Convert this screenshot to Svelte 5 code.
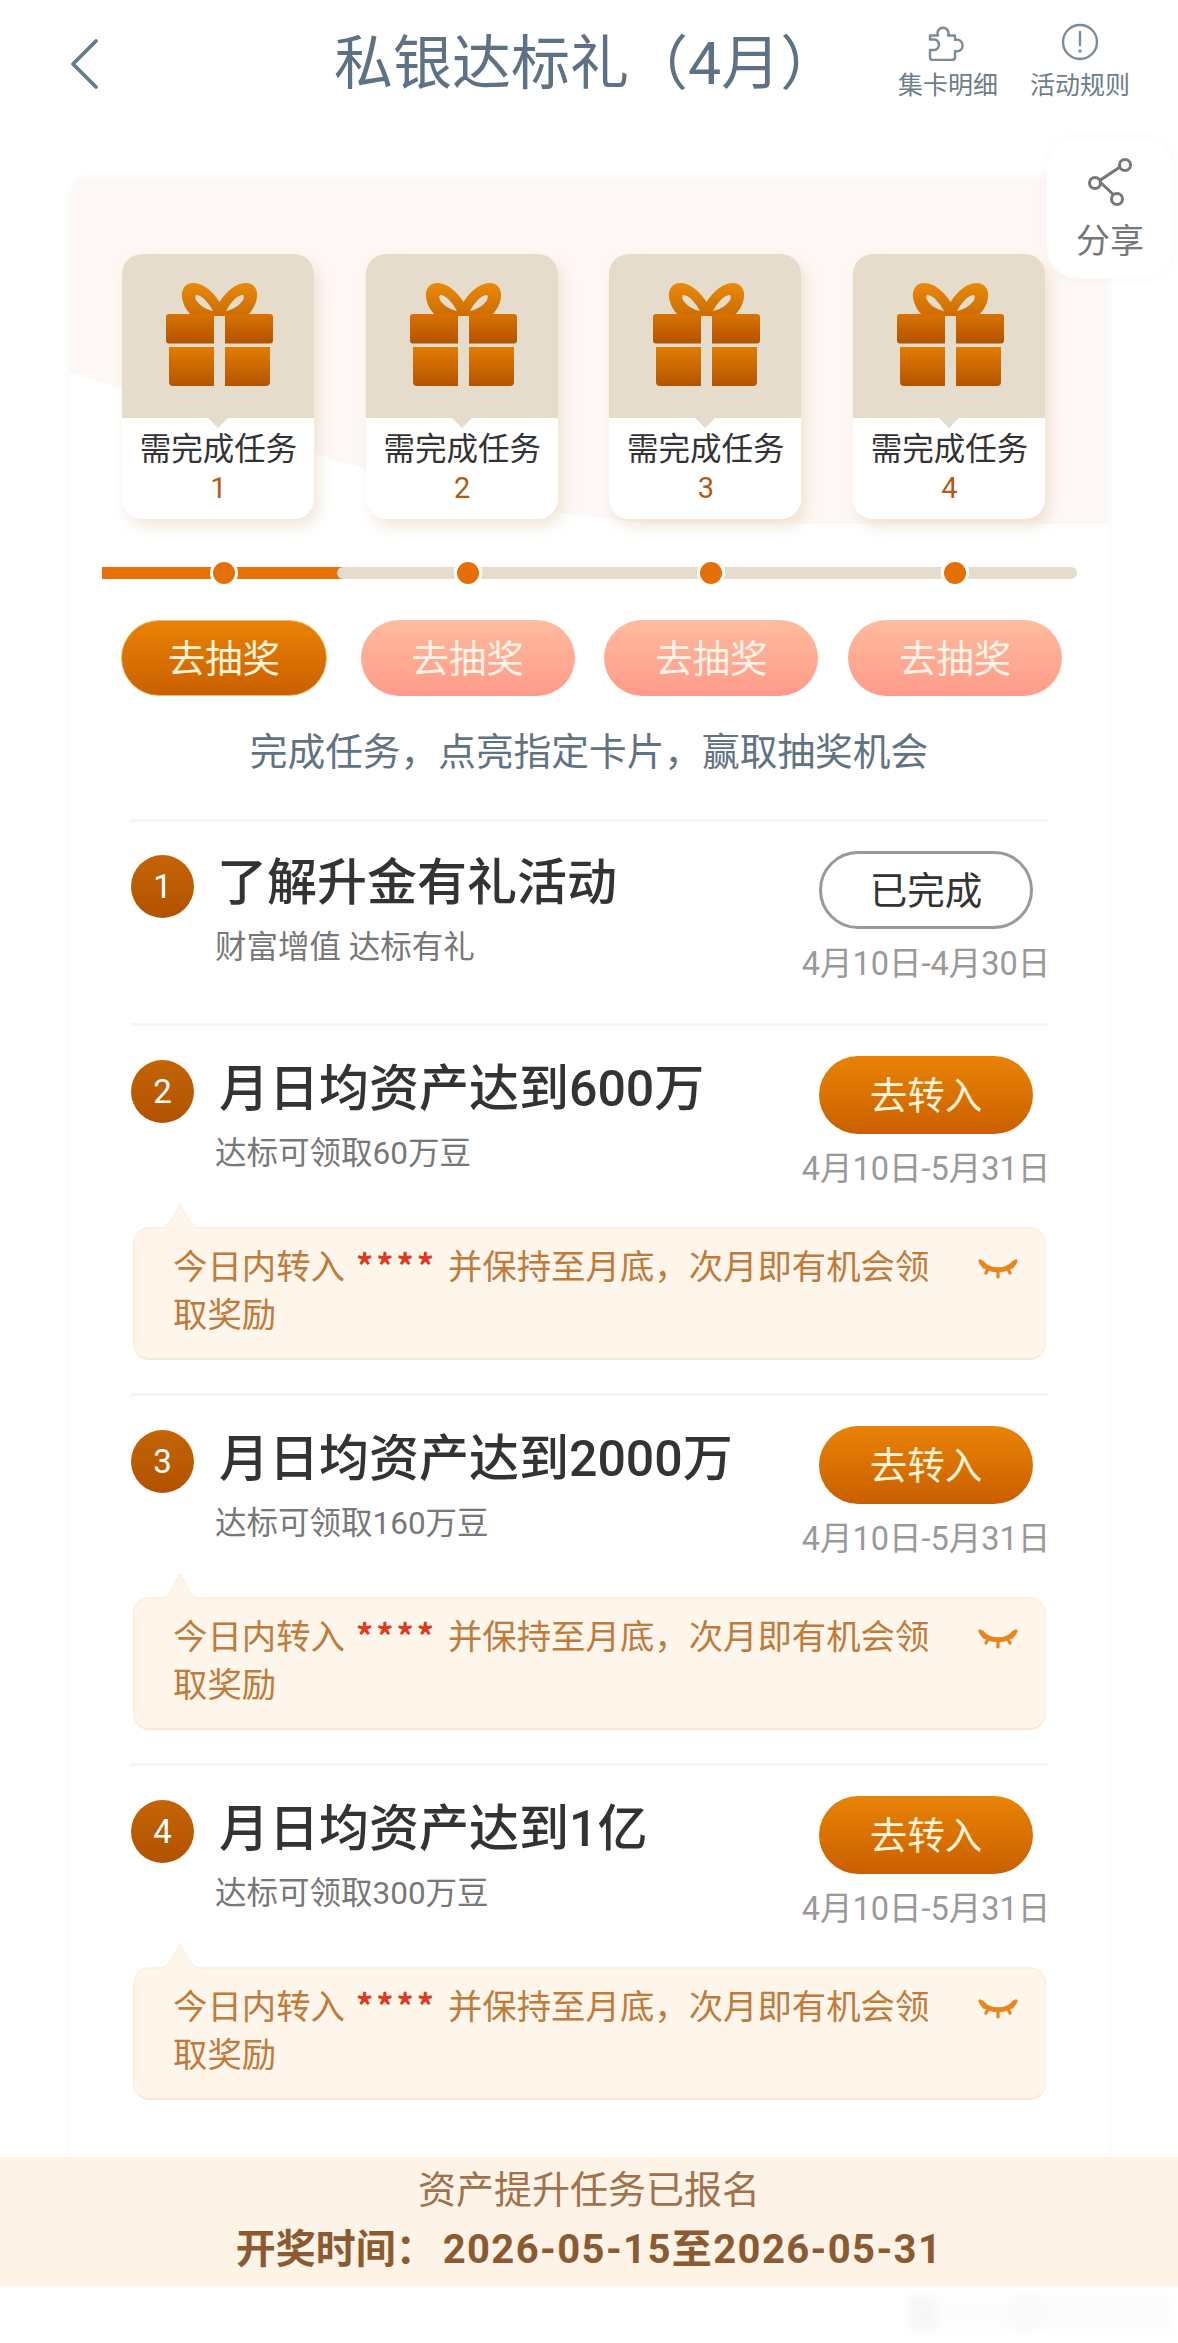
<script>
  const prizes = [1, 2, 3, 4];
  const tasks = [
    { n: 2, title: '月日均资产达到600万', sub: '达标可领取60万豆', date: '4月10日-5月31日' },
    { n: 3, title: '月日均资产达到2000万', sub: '达标可领取160万豆', date: '4月10日-5月31日' },
    { n: 4, title: '月日均资产达到1亿', sub: '达标可领取300万豆', date: '4月10日-5月31日' }
  ];
</script>

<div class="page">
  <header class="header">
    <svg class="back" width="30" height="50" viewBox="0 0 30 50"><path d="M27 2 L4 25 L27 48" fill="none" stroke="#5f7a8c" stroke-width="3.6" stroke-linecap="round" stroke-linejoin="round"/></svg>
    <h1 class="title">私银达标礼（4月）</h1>
    <div class="actions">
      <div class="action">
        <svg width="40" height="38" viewBox="0 0 40 38"><path d="M2 12.500 H10 A5.500 5.500 0 1 1 20 12.500 H27 V17 A5.800 5.800 0 1 1 27 28 V34 Q27 37 24 37 H5 Q2 37 2 34 V27 H7 A5.500 5.500 0 0 0 7 16.500 H2 Z" fill="none" stroke="#7b8b98" stroke-width="2.4" stroke-linejoin="round"/></svg>
        <span>集卡明细</span>
      </div>
      <div class="action">
        <svg width="38" height="38" viewBox="0 0 38 38"><circle cx="19" cy="19" r="17" fill="none" stroke="#7b8b98" stroke-width="2.4"/><path d="M19 9 V22" stroke="#7b8b98" stroke-width="2.4" stroke-linecap="round"/><circle cx="19" cy="28" r="1.7" fill="#7b8b98"/></svg>
        <span>活动规则</span>
      </div>
    </div>
  </header>

  <div class="share">
    <svg width="44" height="50" viewBox="0 0 44 50"><path d="M32 10 L11 24 L28 40" fill="none" stroke="#777" stroke-width="3"/><circle cx="37" cy="8" r="5.5" fill="#fff" stroke="#777" stroke-width="3"/><circle cx="7" cy="26" r="5.5" fill="#fff" stroke="#777" stroke-width="3"/><circle cx="29" cy="42" r="5.5" fill="#fff" stroke="#777" stroke-width="3"/></svg>
    <span>分享</span>
  </div>

  <main class="card">
    <div class="wash"></div>

    <div class="prizes">
      {#each prizes as p}
        <div class="prize">
          <div class="prize-top">
            <svg width="107" height="103" viewBox="0 0 107 103">
              <defs>
                <linearGradient id="bow{p}" x1="0" y1="0" x2="0" y2="1"><stop offset="0" stop-color="#e98a08"/><stop offset="1" stop-color="#cc6c02"/></linearGradient>
                <linearGradient id="box{p}" x1="0" y1="0" x2="0" y2="1"><stop offset="0" stop-color="#e27c00"/><stop offset="1" stop-color="#b45400"/></linearGradient>
                <linearGradient id="lid{p}" x1="0" y1="0" x2="0" y2="1"><stop offset="0" stop-color="#d87200"/><stop offset="1" stop-color="#b25300"/></linearGradient>
              </defs>
              <path fill-rule="evenodd" fill="url(#bow{p})" d="M53.5 19 C46 7 36 0 27 0 C19 0 15 7 16 14 C17 22 21 28 26 33 L81 33 C86 28 90 22 91 14 C92 7 88 0 80 0 C71 0 61 7 53.5 19 Z M30 12 C35 11 43 20 47 28 C39 26 33 22 30 17 C29 15 29 13 30 12 Z M77 12 C72 11 64 20 60 28 C68 26 74 22 77 17 C78 15 78 13 77 12 Z"/>
              <path fill="url(#lid{p})" d="M3 31 H48 V60.500 H3 Q0 60.500 0 57.500 V34 Q0 31 3 31 Z M59 31 H104 Q107 31 107 34 V57.500 Q107 60.500 104 60.500 H59 Z"/>
              <path fill="url(#box{p})" d="M3 64 H48 V103 H7 Q3 103 3 99 Z M59 64 H104 V99 Q104 103 100 103 H59 Z"/>
            </svg>
          </div>
          <div class="prize-bottom">
            <span class="prize-label">需完成任务</span>
            <span class="prize-num">{p}</span>
          </div>
        </div>
      {/each}
    </div>

    <div class="progress">
      <div class="track"></div>
      <div class="fill"></div>
      {#each prizes as p}
        <div class="stop"><i></i></div>
      {/each}
    </div>

    <div class="draws">
      {#each prizes as p}
        <div class="draw-cell">
          <button class="draw" class:muted={p > 1}>去抽奖</button>
        </div>
      {/each}
    </div>

    <p class="caption">完成任务，点亮指定卡片，赢取抽奖机会</p>

    <section class="task">
      <div class="row">
        <div class="left">
          <div class="badge">1</div>
          <div class="copy">
            <div class="task-title first">了解升金有礼活动</div>
            <div class="task-sub">财富增值 达标有礼</div>
          </div>
        </div>
        <div class="right">
          <button class="cta done">已完成</button>
          <div class="date">4月10日-4月30日</div>
        </div>
      </div>
    </section>

    {#each tasks as t}
      <section class="task tipped">
        <div class="row">
          <div class="left">
            <div class="badge">{t.n}</div>
            <div class="copy">
              <div class="task-title">{t.title}</div>
              <div class="task-sub">{t.sub}</div>
            </div>
          </div>
          <div class="right">
            <button class="cta">去转入</button>
            <div class="date">{t.date}</div>
          </div>
        </div>
        <div class="tip">
          <svg class="tip-arrow" width="34" height="27" viewBox="0 0 34 27"><path d="M1 27 C7 22 13 10 17 1 C21 10 27 22 33 27 Z" fill="#fef5eb"/><path d="M1 25 C7 20 13 10 17 1 C21 10 27 20 33 25" fill="none" stroke="#fdf0e2" stroke-width="1.500"/></svg>
          <p class="tip-text">今日内转入<b>****</b>并保持至月底，次月即有机会领<br />取奖励</p>
          <svg class="tip-icon" width="40" height="22" viewBox="0 0 40 22"><path d="M4 5 C11 14 29 14 36 5" fill="none" stroke="#e9851c" stroke-width="5" stroke-linecap="round"/><path d="M2 3 L6 9 M38 3 L34 9 M10 11 L8 15 M30 11 L32 15 M20 13 V19" stroke="#e9851c" stroke-width="3.2" stroke-linecap="round"/></svg>
        </div>
      </section>
    {/each}
  </main>

  <footer class="footer">
    <div class="foot-1">资产提升任务已报名</div>
    <div class="foot-2"><span>开奖时间：</span><span class="foot-date">2026-05-15至2026-05-31</span></div>
  </footer>

  <div class="mark"><i></i></div>
</div>

<style>
  :global(body) {
    margin: 0;
    background: #fff;
    font-family: Roboto, "Noto Sans CJK SC", sans-serif;
  }
  .page {
    position: relative;
    width: 1178px;
    height: 2343px;
    overflow: hidden;
    background: #fff;
  }
  .header {
    height: 178px;
    box-sizing: border-box;
    display: grid;
    grid-template-columns: 265px auto 1fr;
    align-items: start;
    padding: 0 48px 0 69px;
  }
  .back { margin-top: 39px; }
  .title {
    margin: 28px 0 0;
    font-size: 59px;
    line-height: 72px;
    font-weight: 400;
    color: #5d7284;
    white-space: nowrap;
  }
  .actions {
    justify-self: end;
    display: flex;
    gap: 32px;
    padding-top: 23px;
  }
  .action {
    display: flex;
    flex-direction: column;
    align-items: center;
    gap: 9px;
    font-size: 25px;
    line-height: 32px;
    color: #6d7d8a;
  }
  .share {
    position: absolute;
    left: 1047px;
    top: 138px;
    width: 126px;
    height: 140px;
    box-sizing: border-box;
    padding-top: 19px;
    display: flex;
    flex-direction: column;
    align-items: center;
    gap: 12px;
    border-radius: 30px;
    background: rgba(255, 255, 255, 0.94);
    box-shadow: 0 0 14px rgba(0, 0, 0, 0.03);
    font-size: 34px;
    line-height: 44px;
    color: #777;
    z-index: 2;
  }
  .card {
    position: relative;
    margin: 0 70px;
    height: 1979px;
    box-sizing: border-box;
    padding-top: 76px;
    background: #fff;
    border-radius: 18px 18px 0 0;
    box-shadow: 0 0 12px rgba(0, 0, 0, 0.035);
  }
  .wash {
    position: absolute;
    inset: 0 0 auto 0;
    height: 346px;
    background: #fdf8f5;
    border-radius: 18px 18px 0 0;
    clip-path: polygon(0 0, 100% 0, 100% 100%, 56% 100%, 42% 95%, 26% 82%, 0 56%);
  }
  .prizes {
    position: relative;
    margin: 0 63px 0 52px;
    display: grid;
    grid-template-columns: repeat(4, 192px);
    justify-content: space-between;
  }
  .prize {
    height: 265px;
    border-radius: 20px;
    box-shadow: 5px 8px 14px rgba(205, 175, 125, 0.28);
    overflow: hidden;
    background: #fff;
  }
  .prize-top {
    position: relative;
    height: 164px;
    box-sizing: border-box;
    padding: 29px 0 0 44px;
    background: #e6dccc;
  }
  .prize-top::after {
    content: "";
    position: absolute;
    left: 50%;
    bottom: -7px;
    width: 14px;
    height: 14px;
    transform: translateX(-50%) rotate(45deg);
    background: #e6dccc;
  }
  .prize-top svg { display: block; }
  .prize-bottom {
    display: flex;
    flex-direction: column;
    align-items: center;
    padding: 12px 0 0 1px;
  }
  .prize-label {
    font-size: 31.500px;
    line-height: 40px;
    color: #333;
  }
  .prize-num {
    font-size: 29px;
    line-height: 36px;
    color: #b05a14;
  }
  .progress {
    position: relative;
    margin: 48px 31px 0 32px;
    height: 12px;
    display: grid;
    grid-template-columns: repeat(4, 1fr);
    grid-template-rows: 12px;
  }
  .track {
    position: absolute;
    left: 235px;
    right: 0;
    top: 0;
    height: 100%;
    background: #e6dccc;
    border-radius: 6px;
    z-index: 1;
  }
  .fill {
    position: absolute;
    left: 0;
    width: 245px;
    top: 0;
    height: 100%;
    background: #e87105;
  }
  .stop {
    position: relative;
    z-index: 2;
    height: 12px;
    display: flex;
    align-items: center;
    justify-content: center;
  }
  .stop i {
    display: block;
    flex: none;
    width: 22px;
    height: 22px;
    border-radius: 50%;
    background: #e66f05;
    box-shadow: 0 0 0 3px #fff;
  }
  .draws {
    position: relative;
    margin: 41px 31px 0 32px;
    display: grid;
    grid-template-columns: repeat(4, 1fr);
  }
  .draw-cell { display: flex; justify-content: center; }
  .draw {
    width: 214px;
    height: 76px;
    padding: 0 0 5px;
    border: 1px solid #f3b663;
    border-radius: 38px;
    background: linear-gradient(#e98306, #c95f00);
    color: #fff3d8;
    font: inherit;
    font-size: 37.500px;
  }
  .draw-cell:first-child .draw { width: 206px; }
  .draw.muted {
    border: none;
    background: linear-gradient(#ffbc9e, #ff9a8a);
    color: #fff3e6;
  }
  .caption {
    position: relative;
    margin: 31px 0 42px;
    text-align: center;
    font-size: 37.700px;
    line-height: 50px;
    color: #5f7383;
  }
  .task {
    margin: 0 60px 0 61px;
    border-top: 3px solid #f5f5f5;
    padding: 29px 0 39px;
  }
  .task.tipped { padding: 30px 0 33px; }
  .row {
    display: flex;
    justify-content: space-between;
  }
  .left { display: flex; }
  .badge {
    width: 63px;
    height: 63px;
    margin-top: 4px;
    border-radius: 50%;
    background: linear-gradient(#c46406, #b25200);
    color: #fff;
    font-size: 33px;
    line-height: 63px;
    text-align: center;
  }
  .copy { margin-left: 25px; padding-top: 3px; }
  .task-title {
    font-size: 50px;
    line-height: 60px;
    font-weight: 500;
    color: #333;
    white-space: nowrap;
  }
  .task-title.first { margin: -1px 0 0 -2px; }
  .task-sub {
    margin: 15px 0 0 -4px;
    font-size: 31.500px;
    line-height: 40px;
    color: #777;
  }
  .right {
    width: 250px;
    margin-right: -3px;
    display: flex;
    flex-direction: column;
    align-items: center;
  }
  .cta {
    width: 214px;
    height: 78px;
    padding: 0 0 5px;
    border: none;
    border-radius: 39px;
    background: linear-gradient(#e98306, #c95f00);
    color: #fff3d8;
    font: inherit;
    font-size: 37.500px;
  }
  .cta.done {
    box-sizing: border-box;
    border: 3px solid #999;
    background: #fff;
    color: #333;
  }
  .date {
    margin-top: 15px;
    font-size: 32.500px;
    line-height: 40px;
    color: #999;
    white-space: nowrap;
  }
  .tip {
    position: relative;
    margin: 38px 2px 0;
    height: 133px;
    box-sizing: border-box;
    padding: 12px 0 0 38px;
    background: #fef5eb;
    border: 2px solid #fdf0e2;
    border-bottom-color: #fbe8d4;
    border-radius: 16px;
  }
  .tip-arrow {
    position: absolute;
    left: 28px;
    top: -26px;
  }
  .tip-text {
    margin: 0;
    width: 775px;
    font-size: 34.400px;
    line-height: 48px;
    color: #c07a3a;
  }
  .tip-text b {
    margin: 0 11px;
    color: #e03a1e;
    font-family: "Noto Sans CJK SC", sans-serif;
    font-size: 34px;
    letter-spacing: 3px;
  }
  .tip-icon {
    position: absolute;
    right: 26px;
    top: 29px;
  }
  .footer {
    height: 129px;
    box-sizing: border-box;
    padding-top: 10px;
    background: #fdf3e6;
    text-align: center;
    position: relative;
  }
  .foot-1 {
    font-size: 38px;
    line-height: 46px;
    color: #a0714d;
  }
  .foot-2 {
    margin-top: 14px;
    font-size: 40px;
    line-height: 46px;
    font-weight: 700;
    color: #8b5a30;
  }
  .foot-date { margin-left: 7px; letter-spacing: 1.4px; }
  .mark {
    display: flex;
    justify-content: flex-end;
    padding: 9px 8px 0 0;
  }
  .mark i {
    display: block;
    width: 262px;
    height: 36px;
    background: linear-gradient(90deg, #f4f4f4 0 10%, #fcfcfc 12% 38%, #f7f7f7 40% 50%, #fafafa 52% 100%);
    filter: blur(5px);
    opacity: 0.7;
  }
</style>
